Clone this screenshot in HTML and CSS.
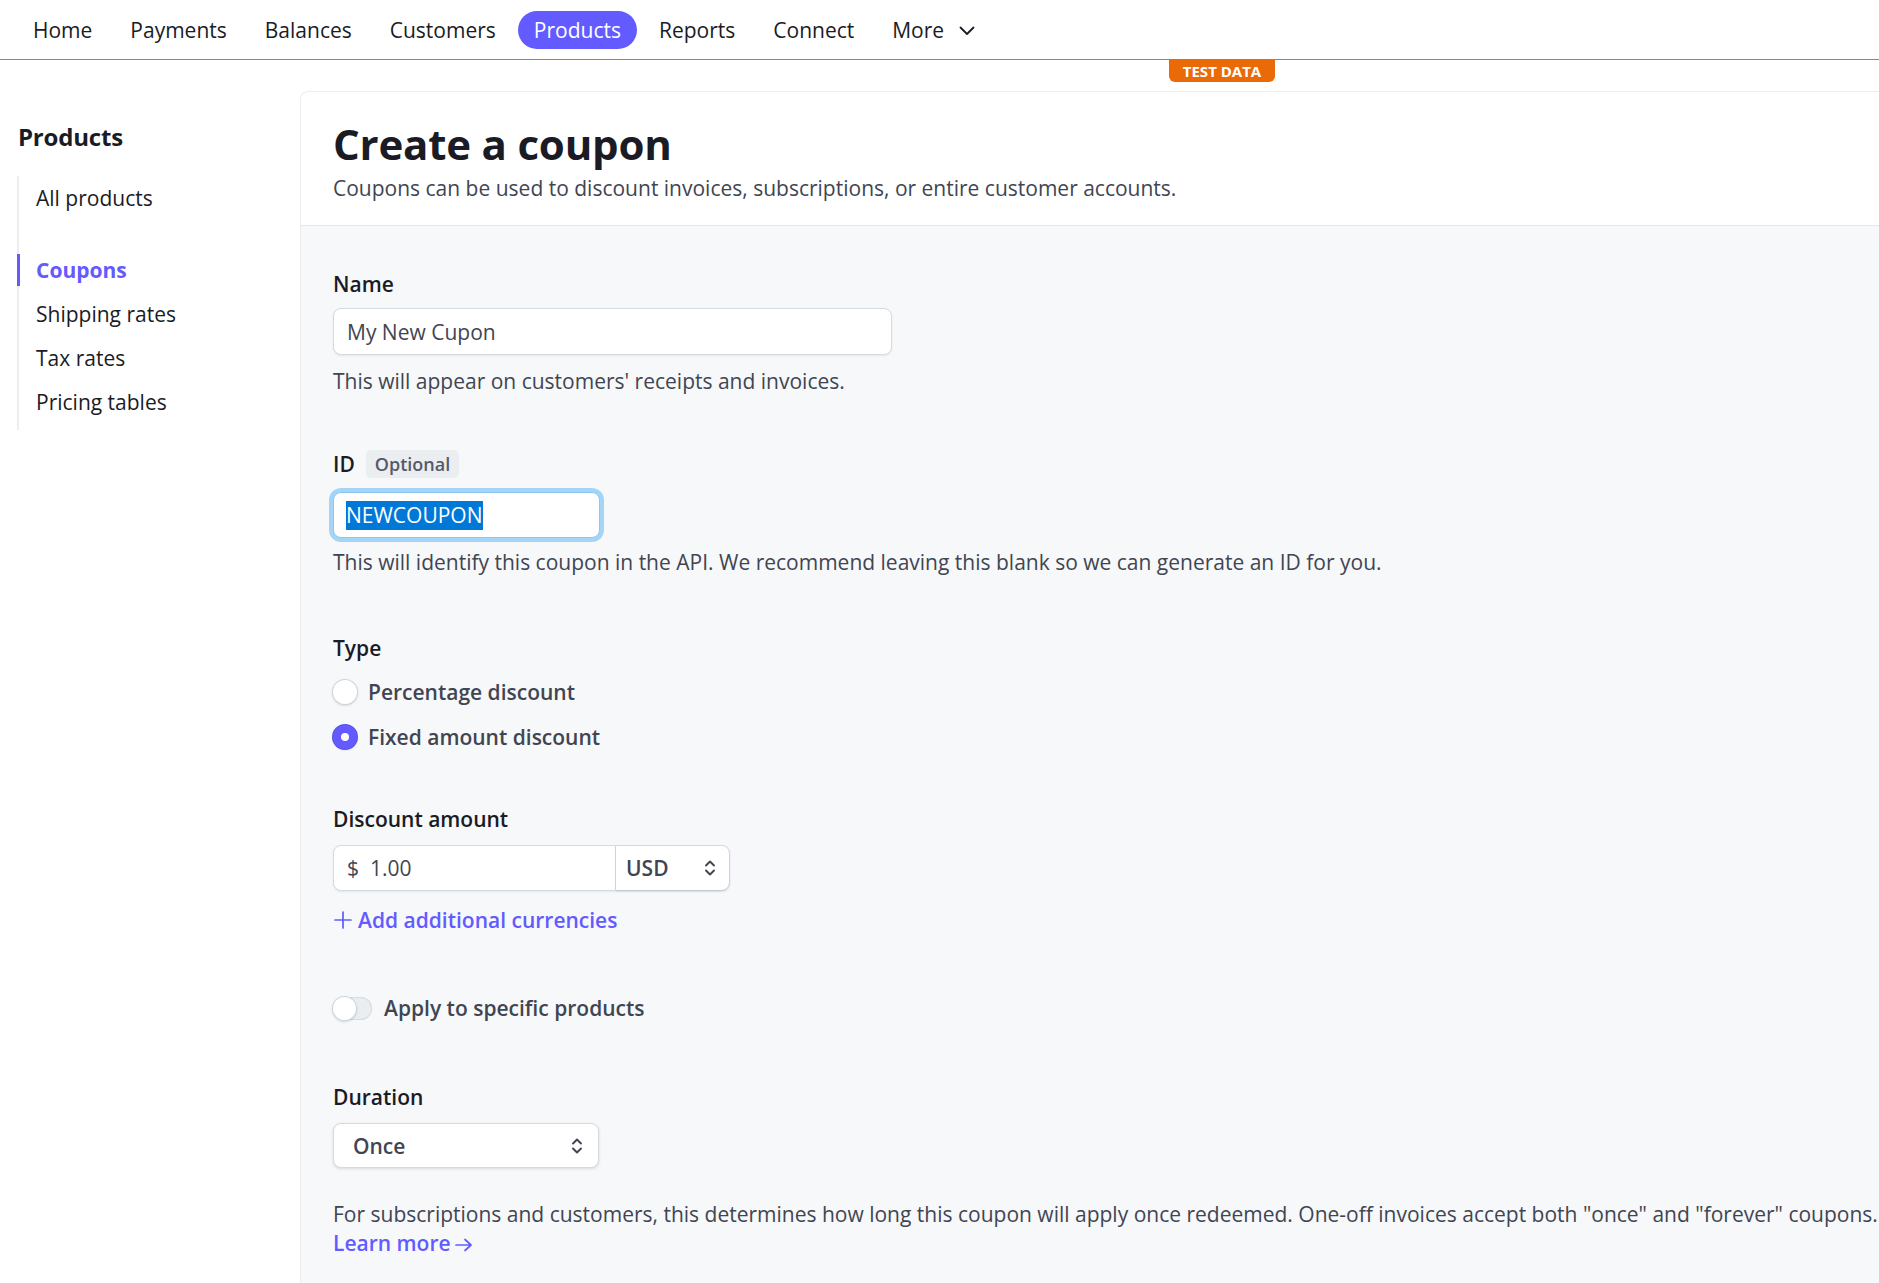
FILE: index.html
```html
<!DOCTYPE html>
<html lang="en">
<head>
<meta charset="utf-8">
<title>Create a coupon</title>
<link rel="stylesheet" href="styles.css">
</head>
<body>
<header class="topnav">
  <nav class="topnav-items">
    <a class="nav-item">Home</a>
    <a class="nav-item">Payments</a>
    <a class="nav-item">Balances</a>
    <a class="nav-item">Customers</a>
    <a class="nav-item active">Products</a>
    <a class="nav-item">Reports</a>
    <a class="nav-item">Connect</a>
    <a class="nav-item more">More
      <svg class="chev" width="16" height="10" viewBox="0 0 16 10"><path d="M1.5 1.5 L8 8 L14.5 1.5" fill="none" stroke="currentColor" stroke-width="1.8" stroke-linecap="round" stroke-linejoin="round"/></svg>
    </a>
  </nav>
  <div class="test-badge">TEST DATA</div>
</header>

<div class="layout">
  <aside class="sidebar">
    <h2 class="side-title">Products</h2>
    <ul class="side-list">
      <li class="side-item">All products</li>
      <li class="side-item first-of-group active">Coupons</li>
      <li class="side-item">Shipping rates</li>
      <li class="side-item">Tax rates</li>
      <li class="side-item">Pricing tables</li>
    </ul>
  </aside>

  <main class="panel">
    <section class="panel-head">
      <h1 class="title">Create a coupon</h1>
      <p class="subtitle">Coupons can be used to discount invoices, subscriptions, or entire customer accounts.</p>
    </section>

    <section class="form">
      <div class="field">
        <div class="label">Name</div>
        <div class="input name-input">My New Cupon</div>
        <p class="help">This will appear on customers' receipts and invoices.</p>
      </div>

      <div class="field field-id">
        <div class="label label-row">ID <span class="optional">Optional</span></div>
        <div class="input id-input focused"><span class="selected">NEWCOUPON</span></div>
        <p class="help help-tight">This will identify this coupon in the API. We recommend leaving this blank so we can generate an ID for you.</p>
      </div>

      <div class="field field-type">
        <div class="label">Type</div>
        <div class="radios">
          <div class="radio-row"><span class="radio"></span><span class="radio-label">Percentage discount</span></div>
          <div class="radio-row"><span class="radio checked"></span><span class="radio-label">Fixed amount discount</span></div>
        </div>
      </div>

      <div class="field field-amount">
        <div class="label">Discount amount</div>
        <div class="amount-group">
          <div class="amount-input"><span class="currency-sign">$</span><span>1.00</span></div>
          <div class="currency-select">USD
            <svg class="updown" width="14" height="20" viewBox="0 0 14 20"><path d="M3 7.5 L7 3.5 L11 7.5 M3 12.5 L7 16.5 L11 12.5" fill="none" stroke="currentColor" stroke-width="1.9" stroke-linecap="round" stroke-linejoin="round"/></svg>
          </div>
        </div>
        <a class="add-link">
          <svg class="plus" width="20" height="20" viewBox="0 0 20 20"><path d="M10 2 V18 M2 10 H18" fill="none" stroke="currentColor" stroke-width="1.7" stroke-linecap="round"/></svg>
          Add additional currencies
        </a>
      </div>

      <div class="field field-toggle">
        <div class="toggle-row">
          <span class="toggle"><span class="knob"></span></span>
          <span class="toggle-label">Apply to specific products</span>
        </div>
      </div>

      <div class="field field-duration">
        <div class="label">Duration</div>
        <div class="select">Once
          <svg class="updown" width="14" height="20" viewBox="0 0 14 20"><path d="M3 7.5 L7 3.5 L11 7.5 M3 12.5 L7 16.5 L11 12.5" fill="none" stroke="currentColor" stroke-width="1.9" stroke-linecap="round" stroke-linejoin="round"/></svg>
        </div>
        <p class="help help-duration">For subscriptions and customers, this determines how long this coupon will apply once redeemed. One-off invoices accept both "once" and "forever" coupons.<br>
        <a class="learn-more">Learn more
          <svg class="arrow" width="20" height="16" viewBox="0 0 20 16"><path d="M2 8 H17 M11 2.5 L17 8 L11 13.5" fill="none" stroke="currentColor" stroke-width="1.7" stroke-linecap="round" stroke-linejoin="round"/></svg>
        </a></p>
      </div>
    </section>
  </main>
</div>
</body>
</html>
```

FILE: styles.css
```css
* { box-sizing: border-box; }

html, body {
  margin: 0;
  padding: 0;
  background: #ffffff;
  font-family: "Open Sans", "Noto Sans", "Liberation Sans", sans-serif;
  color: #414552;
  font-size: 21px;
  overflow: hidden;
}

p { margin: 0; }
h1, h2 { margin: 0; }
ul { margin: 0; padding: 0; list-style: none; }
a { cursor: pointer; }

/* ---------- top nav ---------- */
.topnav {
  position: relative;
  height: 60px;
  border-bottom: 1px solid #e46b27;
  display: flex;
  align-items: center;
  padding-left: 17px;
}

.topnav-items {
  display: flex;
  align-items: center;
  gap: 6px;
}

.nav-item {
  display: flex;
  align-items: center;
  height: 38px;
  padding: 1px 16px 0 16px;
  border-radius: 19px;
  color: #1a1b25;
  font-size: 21px;
  font-weight: 500;
}

.nav-item.active {
  background: #635bff;
  color: #ffffff;
}

.nav-item.more .chev {
  margin-left: 15px;
  margin-top: 2px;
}

.test-badge {
  position: absolute;
  left: 1169px;
  top: 59px;
  width: 106px;
  height: 23px;
  background: #ea6a08;
  color: #ffffff;
  font-size: 15px;
  font-weight: 700;
  display: flex;
  align-items: center;
  justify-content: center;
  border-radius: 0 0 6px 6px;
}

/* ---------- layout ---------- */
.layout {
  display: flex;
  align-items: stretch;
  min-height: 1223px;
}

.sidebar {
  width: 300px;
  flex: 0 0 300px;
  padding: 61px 0 0 17px;
}

.side-title {
  font-size: 24px;
  font-weight: 700;
  line-height: 32px;
  color: #1a1b25;
  padding-left: 1px;
  letter-spacing: -0.2px;
}

.side-list {
  margin-top: 23px;
  border-left: 2px solid #ebeef1;
  padding-bottom: 6px;
}

.side-item {
  position: relative;
  height: 44px;
  line-height: 44px;
  padding-left: 17px;
  color: #1a1b25;
  font-size: 21px;
}

.side-item.first-of-group { margin-top: 28px; }

.side-item.active {
  color: #635bff;
  font-weight: 700;
}

.side-item.active::before {
  content: "";
  position: absolute;
  left: -2px;
  top: 6px;
  bottom: 6px;
  width: 3px;
  background: #635bff;
}

/* ---------- panel ---------- */
.panel {
  flex: 1;
  margin-top: 31px;
  border-top: 1px solid #ebeef1;
  border-left: 1px solid #ebeef1;
  border-top-left-radius: 8px;
  background: #f6f8fa;
  display: flex;
  flex-direction: column;
}

.panel-head {
  background: #ffffff;
  border-top-left-radius: 8px;
  padding: 27px 32px 25px 32px;
  border-bottom: 1px solid #e3e8ee;
}

.title {
  font-size: 42px;
  font-weight: 700;
  line-height: 50px;
  color: #1a1b25;
  letter-spacing: -0.2px;
}

.subtitle {
  margin-top: 7px;
  font-size: 21px;
  line-height: 24px;
  color: #414552;
}

.form {
  flex: 1;
  padding: 44px 32px 40px 32px;
}

.label {
  font-size: 21px;
  font-weight: 600;
  line-height: 28px;
  color: #1a1b25;
}

.label-row {
  display: flex;
  align-items: center;
  gap: 11px;
  height: 28px;
}

.optional {
  display: inline-flex;
  align-items: center;
  height: 28px;
  padding: 0 9px;
  background: #ebeef1;
  color: #545969;
  font-size: 18px;
  font-weight: 600;
  border-radius: 5px;
}

.input {
  display: flex;
  align-items: center;
  background: #ffffff;
  border: 1px solid #d5dbe1;
  border-radius: 8px;
  box-shadow: 0 1px 2px rgba(64, 68, 82, 0.1);
  color: #414552;
  font-size: 21px;
}

.name-input {
  margin-top: 10px;
  width: 559px;
  height: 47px;
  padding: 0 13px;
}

.id-input {
  margin-top: 14px;
  width: 267px;
  height: 46px;
  padding: 0 12px;
}

.input.focused {
  border-color: #8ec8f2;
  box-shadow: 0 0 0 4px #a5d5f6;
}

.selected {
  background: #0078d7;
  color: #ffffff;
  line-height: 29px;
}

.help {
  margin-top: 12px;
  font-size: 21px;
  line-height: 28px;
  color: #414552;
}

.help-tight { margin-top: 10px; }

.field-id { margin-top: 55px; }
.field-type { margin-top: 58px; }
.field-amount { margin-top: 52px; }
.field-toggle { margin-top: 60px; }
.field-duration { margin-top: 61px; }

/* radios */
.radios {
  margin-top: 14px;
  display: flex;
  flex-direction: column;
  gap: 13px;
}

.radio-row {
  display: flex;
  align-items: center;
  height: 32px;
}

.radio {
  width: 24px;
  height: 24px;
  border-radius: 50%;
  background: #ffffff;
  box-shadow: 0 0 0 1px #d0d6dd, 0 1px 3px rgba(64, 68, 82, 0.3);
  margin-right: 11px;
  display: flex;
  align-items: center;
  justify-content: center;
}

.radio.checked {
  background: #635bff;
  box-shadow: 0 0 0 1px #5851e6, 0 1px 2px rgba(64, 68, 82, 0.25);
}

.radio.checked::after {
  content: "";
  width: 8px;
  height: 8px;
  border-radius: 50%;
  background: #ffffff;
}

.radio-label {
  font-size: 21px;
  font-weight: 600;
  color: #414552;
}

/* amount */
.amount-group {
  margin-top: 12px;
  display: flex;
  width: 397px;
  height: 46px;
  background: #ffffff;
  border: 1px solid #d5dbe1;
  border-radius: 8px;
  box-shadow: 0 1px 2px rgba(64, 68, 82, 0.1);
}

.amount-input {
  flex: 0 0 282px;
  display: flex;
  align-items: center;
  padding-left: 13px;
  color: #414552;
  font-size: 21px;
  border-right: 1px solid #d5dbe1;
}

.currency-sign { margin-right: 11px; }

.currency-select {
  flex: 1;
  display: flex;
  align-items: center;
  justify-content: space-between;
  padding: 0 12px 0 10px;
  font-weight: 600;
  font-size: 21px;
  color: #414552;
  box-shadow: 0 1px 2px rgba(64, 68, 82, 0.15);
  border-radius: 0 8px 8px 0;
}

.updown { color: #414552; }

.add-link {
  margin-top: 15px;
  display: flex;
  align-items: center;
  height: 28px;
  color: #635bff;
  font-weight: 600;
  font-size: 21px;
}

.add-link .plus { margin-right: 5px; }

/* toggle */
.toggle-row {
  display: flex;
  align-items: center;
  height: 28px;
}

.toggle {
  position: relative;
  width: 39px;
  height: 23px;
  border-radius: 12px;
  background: #ebeef1;
  box-shadow: inset 0 0 0 1px #d5dbe1;
  margin-right: 12px;
  display: flex;
  align-items: center;
}

.knob {
  width: 23px;
  height: 23px;
  border-radius: 50%;
  background: #ffffff;
  box-shadow: 0 0 0 1px #cfd5dc, 0 1px 3px rgba(64, 68, 82, 0.35);
}

.toggle-label {
  font-size: 21px;
  font-weight: 600;
  color: #414552;
}

/* select */
.select {
  margin-top: 12px;
  width: 266px;
  height: 45px;
  display: flex;
  align-items: center;
  justify-content: space-between;
  padding: 0 14px 0 19px;
  background: #ffffff;
  border: 1px solid #d5dbe1;
  border-radius: 8px;
  box-shadow: 0 1px 3px rgba(64, 68, 82, 0.16);
  font-size: 21px;
  font-weight: 600;
  color: #414552;
}

.help-duration {
  margin-top: 32px;
  line-height: 29px;
  white-space: nowrap;
}

.learn-more {
  display: inline-flex;
  align-items: center;
  color: #635bff;
  font-weight: 600;
}

.learn-more .arrow { margin-left: 3px; margin-top: 2px; }
```
